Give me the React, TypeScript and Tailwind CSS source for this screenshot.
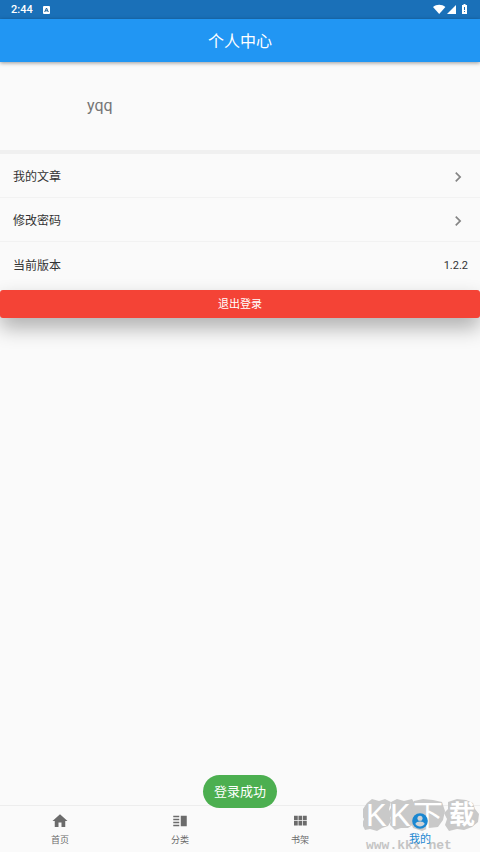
import { MdChevronRight, MdHome } from 'react-icons/md'

const fontStack = "font-[Roboto,'Noto_Sans_CJK_SC',sans-serif]"

function StatusBar() {
  return (
    <div className="h-[19px] px-[11px] flex items-center justify-between bg-[#1a70b8] text-white">
      <div className="flex items-center gap-[10px]">
        <span className="text-[11px] leading-none font-medium">2:44</span>
        <svg width="7" height="8" viewBox="0 0 7 8" aria-hidden="true">
          <rect width="7" height="8" rx="1" fill="#fff" />
          <path d="M1.7 6 3.5 2 5.3 6M2.4 4.8h2.2" fill="none" stroke="#1a6096" strokeWidth="1" />
        </svg>
      </div>
      <div className="flex items-center">
        <svg width="36" height="11" viewBox="0 0 36 11" fill="#fff" aria-hidden="true">
          <path d="M0 3C3.5-.1 8.900-.1 12.400 3L6.200 10z" />
          <path d="M23 1v9h-9z" />
          <path d="M29 1h1.500V0h2v1H34v9h-5z" />
          <path d="M31 3h1v3h-1zM31 7h1v1h-1z" fill="#1a70b8" />
        </svg>
      </div>
    </div>
  )
}

function MenuRow({ label }: { label: string }) {
  return (
    <button className="w-full h-11 pl-[13px] pr-3 pt-[2px] flex items-center justify-between border-b border-[#f2f2f2]">
      <span>{label}</span>
      <MdChevronRight className="size-5 text-[#858585]" />
    </button>
  )
}

const tabs = [
  { label: '首页', icon: <MdHome className="size-[18px]" /> },
  {
    label: '分类',
    icon: (
      <svg className="size-[18px]" viewBox="0 0 24 24" fill="currentColor" aria-hidden="true">
        <path d="M3 15h8v-2H3v2zm0 4h8v-2H3v2zm0-8h8V9H3v2zm0-6v2h8V5H3zm10 0h8v14h-8V5z" />
      </svg>
    ),
  },
  {
    label: '书架',
    icon: (
      <svg className="size-[18px]" viewBox="0 0 24 24" fill="currentColor" aria-hidden="true">
        <path d="M4 11h5V5H4v6zm0 7h5v-6H4v6zm6 0h5v-6h-5v6zm6 0h5v-6h-5v6zm-6-7h5V5h-5v6zm6-6v6h5V5h-5z" />
      </svg>
    ),
  },
  {
    label: '我的',
    active: true,
    icon: (
      <svg className="size-[18px]" viewBox="0 0 24 24" aria-hidden="true">
        <circle cx="12" cy="12" r="10.400" fill="currentColor" />
        <circle cx="12" cy="8.400" r="3.400" fill="#cfd3d6" />
        <path d="M5.800 16c.1-2.200 4-3.300 6.200-3.300s6.100 1.100 6.200 3.300c-1.300 2-3.600 3.300-6.200 3.300S7.100 18 5.800 16z" fill="#cfd3d6" />
      </svg>
    ),
  },
]

function Watermark() {
  return (
    <div className="absolute right-0 bottom-0 pointer-events-none">
      <svg width="117" height="54" viewBox="0 0 117 54" aria-hidden="true">
        <g fill="#c9c9c9">
          <path d="M4 5 9 1l7 2 6-2 6 3-2 7 1 6 1 6-3 5-6 2-5 3-7-2-5 1-3-6 2-5-4-6 3-4z" />
          <path d="M28 4 34 1l7 2 8-2 3 5-2 6 2 7-1 7-6 4-7 0-6 2-5-5 1-7-3-5 3-5z" />
          <path d="M51 3 60 1l10 1 9 2 3 9-2 9-5 7-9 1-7 3-9-3-3-8 3-8-2-5z" />
          <path d="M85 4 94 1l9 1 7 3 2 6 4 5-1 8-6 5-8 3-7-1-8 2-4-6 2-6-3-6 4-4z" />
        </g>
        <g fill="#fff" fontFamily="'Liberation Sans','Noto Sans CJK SC',sans-serif">
          <text x="3" y="28" fontSize="31">K</text>
          <text x="27" y="28" fontSize="31">K</text>
          <text x="50" y="28" fontSize="30">下</text>
          <text x="86" y="26" fontSize="26" fontWeight="bold">载</text>
        </g>
        <text x="3" y="51" fontSize="13" fontWeight="bold" fill="#c4c4c4" fontFamily="'Liberation Mono',monospace">
          www.kkx.net
        </text>
      </svg>
    </div>
  )
}

export default function App() {
  return (
    <div className={`relative min-h-screen flex flex-col bg-[#fafafa] text-[#333] text-xs ${fontStack}`}>
      <StatusBar />
      <header className="h-[43px] pt-[2px] flex items-center justify-center bg-[#2196f3] shadow-[0_1px_4px_rgba(0,0,0,0.4)]">
        <h1 className="text-base text-white">个人中心</h1>
      </header>

      <main className="flex-1">
        <section className="h-[92px] pl-[87px] flex items-center border-b-4 border-[#f0f0f0]">
          <p className="text-base text-[#757575]">yqq</p>
        </section>
        <MenuRow label="我的文章" />
        <MenuRow label="修改密码" />
        <div className="h-12 pl-[13px] pr-3 flex items-center justify-between">
          <span>当前版本</span>
          <span className="text-[11px]">1.2.2</span>
        </div>
        <button className="w-full h-7 pt-[2px] rounded-[3px] bg-[#f44336] text-white text-[11px] shadow-[0_10px_20px_rgba(0,0,0,0.3)]">
          退出登录
        </button>
      </main>

      <nav className="relative h-[47px] grid grid-cols-4 border-t border-[#ededed] bg-[#fafafa]">
        <Watermark />
        {tabs.map((tab) => (
          <button
            key={tab.label}
            className={
              tab.active
                ? 'relative pt-[6px] flex flex-col items-center gap-[2px] text-[#1a87d1] text-[11px] leading-4'
                : 'relative pt-[6px] flex flex-col items-center gap-[2px] text-[#6b6b6b] text-[9px] leading-4'
            }
          >
            {tab.icon}
            <span>{tab.label}</span>
          </button>
        ))}
      </nav>

      <div role="status" className="absolute bottom-[44px] left-1/2 -translate-x-1/2 h-[33px] px-[11px] flex items-center rounded-full bg-[#4caf50] text-white text-[13px] whitespace-nowrap">
        登录成功
      </div>
    </div>
  )
}
